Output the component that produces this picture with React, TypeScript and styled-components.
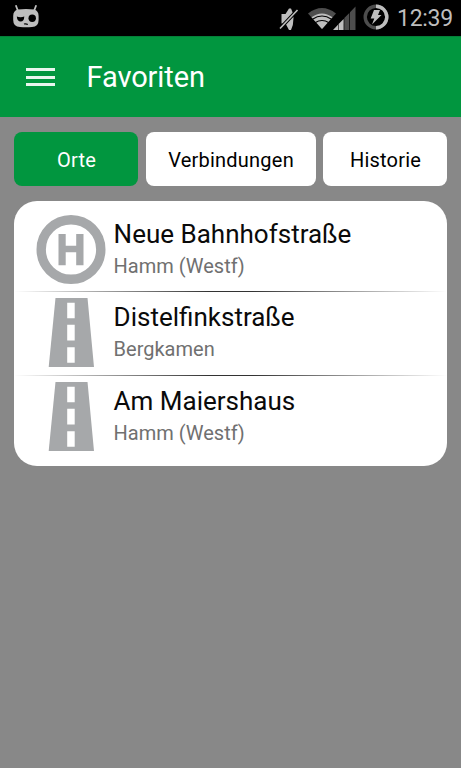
import React, { useState } from 'react';
import styled, { createGlobalStyle } from 'styled-components';

const palette = {
  green: '#01963f',
  background: '#888888',
  icon: '#a6a8aa',
  status: '#bebebe',
  statusDim: '#4d4d4d',
};

const GlobalStyle = createGlobalStyle`
  body {
    margin: 0;
    background-color: ${palette.background};
    font-family: Roboto, 'Liberation Sans', sans-serif;
  }

  * {
    box-sizing: border-box;
  }

  svg {
    display: block;
    flex-shrink: 0;
  }
`;

const Screen = styled.div`
  width: 461px;
  height: 768px;
  background-color: ${palette.background};
  overflow: hidden;
`;

const StatusBar = styled.div`
  height: 36px;
  background-color: #000;
  display: flex;
  align-items: center;
  justify-content: space-between;
  padding: 0 8px 0 12px;
`;

const StatusIcons = styled.div`
  display: flex;
  align-items: center;

  > .wifi {
    margin-left: 8px;
    margin-right: -3px;
  }

  > .battery {
    margin-left: 6px;
    margin-bottom: 2px;
  }
`;

const Clock = styled.span`
  width: 56px;
  margin-left: 8px;
  padding-top: 2px;
  color: ${palette.status};
  font-size: 23px;
  line-height: 34px;
  letter-spacing: -0.3px;
  white-space: nowrap;
`;

const Header = styled.header`
  height: 81px;
  background-color: ${palette.green};
  border-top: 1px solid #067f39;
  display: flex;
  align-items: center;
  padding-left: 26px;

  > h1 {
    margin: 0 0 0 31.5px;
    color: #fff;
    font-size: 29px;
    font-weight: 400;
    line-height: 36px;
    letter-spacing: -0.1px;
  }
`;

const MenuButton = styled.button`
  width: 29px;
  height: 18px;
  padding: 0;
  border: 0;
  background: none;
  display: flex;
  flex-direction: column;
  justify-content: space-between;
  cursor: pointer;

  > span {
    width: 29px;
    height: 3px;
    background-color: #e9f6ee;
  }
`;

const TabBar = styled.nav`
  display: grid;
  grid-template-columns: 123.5px 170px 123.5px;
  column-gap: 7.7px;
  padding: 14.5px 14px 0 14.4px;
`;

const Tab = styled.button<{ $active: boolean }>`
  height: 54.5px;
  padding: 2px 0 0 1px;
  border: 0;
  border-radius: 8px;
  background-color: ${({ $active }) => ($active ? palette.green : '#fff')};
  color: ${({ $active }) => ($active ? '#fff' : '#000')};
  font-family: inherit;
  font-size: 20px;
  letter-spacing: 0.22px;
  cursor: pointer;
`;

const Card = styled.ul`
  list-style: none;
  margin: 14.5px 14px 0;
  padding: 7px 0 8px;
  height: 265px;
  border-radius: 23px;
  background-color: #fff;
`;

const Row = styled.li`
  height: 83.5px;
  padding: 0 0 0 22px;
  display: flex;
  align-items: center;

  > .text {
    margin-left: 7.6px;
  }
`;

const Divider = styled.li`
  height: 1px;
  margin: 0 0 -1px;
  background: linear-gradient(to right, transparent, #333 45%, #333 55%, transparent);
`;

const PlaceName = styled.p`
  margin: 0;
  color: #0a0a0a;
  font-size: 26px;
  line-height: 33px;
`;

const City = styled.p`
  margin: 0;
  color: #707070;
  font-size: 20px;
  line-height: 30px;
`;

const RobotIcon = () => (
  <svg width="28" height="28" viewBox="0 0 28 28">
    <path d="M3.8 1.2 6 7M24.2 1.2 22 7" stroke={palette.status} strokeWidth="1.8" />
    <path
      d="M6 5.5Q14 4.5 22 5.5Q26.6 6.5 26.6 12V16Q26.6 22.8 20 23Q14 23.5 8 23Q1.2 22.8 1.2 16V12Q1.2 6.5 6 5.5Z"
      fill={palette.status}
    />
    <path d="M4.8 12.5Q8.5 14 12.3 12.5Q12.1 17.6 8.7 17.6Q5.2 17.6 4.8 12.5Z" fill="#000" />
    <circle cx="20.2" cy="14.2" r="3.7" fill="#000" />
    <path d="M12 20Q14 19.4 15.8 20.5" fill="none" stroke="#000" strokeWidth="1.2" />
  </svg>
);

const MutedIcon = () => (
  <svg width="22" height="26" viewBox="0 0 22 26">
    <path d="M3.5 9H7.5L11 3.5H13Q15.5 8 15.5 13Q15.5 20 13 25H11L7.5 18.5H3.5Z" fill={palette.status} />
    <path d="M2 23.5 19.5 5" stroke="#000" strokeWidth="3.4" />
    <path d="M2 23.5 19.5 5" stroke={palette.status} strokeWidth="1.6" />
  </svg>
);

const WifiIcon = () => (
  <svg className="wifi" width="28" height="24" viewBox="0 0 28 24">
    <path d="M14 23 0 7.5Q14-3.5 28 7.5Z" fill={palette.statusDim} />
    <path d="M14 23 3.5 11.3Q14 3.5 24.5 11.3Z" fill={palette.status} />
    <path
      d="M4.5 13.2Q14 6.7 23.5 13.2M7 16.8Q14 12.2 21 16.8"
      fill="none"
      stroke="#000"
      strokeWidth="1.1"
    />
  </svg>
);

const SignalIcon = () => (
  <svg width="24" height="24" viewBox="0 0 24 24">
    <path d="M0 24 5 18.8V24Z" fill={palette.status} />
    <path d="M5.6 18 10.6 12.9V24H5.6Z" fill={palette.status} />
    <path d="M11.3 12 16.3 7V24H11.3ZM17 6.2 22.5 0.5V24H17Z" fill={palette.statusDim} />
  </svg>
);

const BatteryIcon = () => (
  <svg className="battery" width="26" height="26" viewBox="0 0 26 26">
    <circle cx="13" cy="13" r="10.8" fill="none" stroke={palette.statusDim} strokeWidth="3.4" />
    <path d="M13 2.2A10.8 10.8 0 0 1 13 23.8" fill="none" stroke={palette.status} strokeWidth="3.4" />
    <path d="M11 6H17L15 11H18.5L9 20.5L11.3 14.5H7.7Z" fill={palette.status} />
  </svg>
);

const StopIcon = () => (
  <svg width="70" height="69" viewBox="-0.5 0 70 69">
    <circle cx="34.5" cy="34.5" r="29.8" fill="none" stroke={palette.icon} strokeWidth="9.4" />
    <path d="M22 19H29.2V30.7H39.7V19H47V50.2H39.7V37.3H29.2V50.2H22Z" fill={palette.icon} />
  </svg>
);

const RoadIcon = () => (
  <svg width="70" height="69" viewBox="-0.5 0 70 69">
    <path d="M19 0H51L57.5 69H12.2Z" fill={palette.icon} />
    <path d="M30.7 4.8H38.2V20.3H30.7ZM30.7 26.8H38.2V42.6H30.7ZM30.7 49.2H38.2V64.8H30.7Z" fill="#fff" />
  </svg>
);

interface Place {
  name: string;
  city: string;
  kind: 'stop' | 'street';
}

const tabs = ['Orte', 'Verbindungen', 'Historie'];

const places: Place[] = [
  { name: 'Neue Bahnhofstraße', city: 'Hamm (Westf)', kind: 'stop' },
  { name: 'Distelfinkstraße', city: 'Bergkamen', kind: 'street' },
  { name: 'Am Maiershaus', city: 'Hamm (Westf)', kind: 'street' },
];

const App = () => {
  const [activeTab, setActiveTab] = useState('Orte');

  return (
    <>
      <GlobalStyle />
      <Screen>
        <StatusBar>
          <RobotIcon />
          <StatusIcons>
            <MutedIcon />
            <WifiIcon />
            <SignalIcon />
            <BatteryIcon />
            <Clock>12:39</Clock>
          </StatusIcons>
        </StatusBar>
        <Header>
          <MenuButton>
            <span />
            <span />
            <span />
          </MenuButton>
          <h1>Favoriten</h1>
        </Header>
        <TabBar>
          {tabs.map((tab) => (
            <Tab key={tab} $active={tab === activeTab} onClick={() => setActiveTab(tab)}>
              {tab}
            </Tab>
          ))}
        </TabBar>
        <Card>
          {places.map(({ name, city, kind }, index) => (
            <React.Fragment key={name}>
              {index > 0 ? <Divider /> : null}
              <Row>
                {kind === 'stop' ? <StopIcon /> : <RoadIcon />}
                <div className="text">
                  <PlaceName>{name}</PlaceName>
                  <City>{city}</City>
                </div>
              </Row>
            </React.Fragment>
          ))}
        </Card>
      </Screen>
    </>
  );
};

export default App;
